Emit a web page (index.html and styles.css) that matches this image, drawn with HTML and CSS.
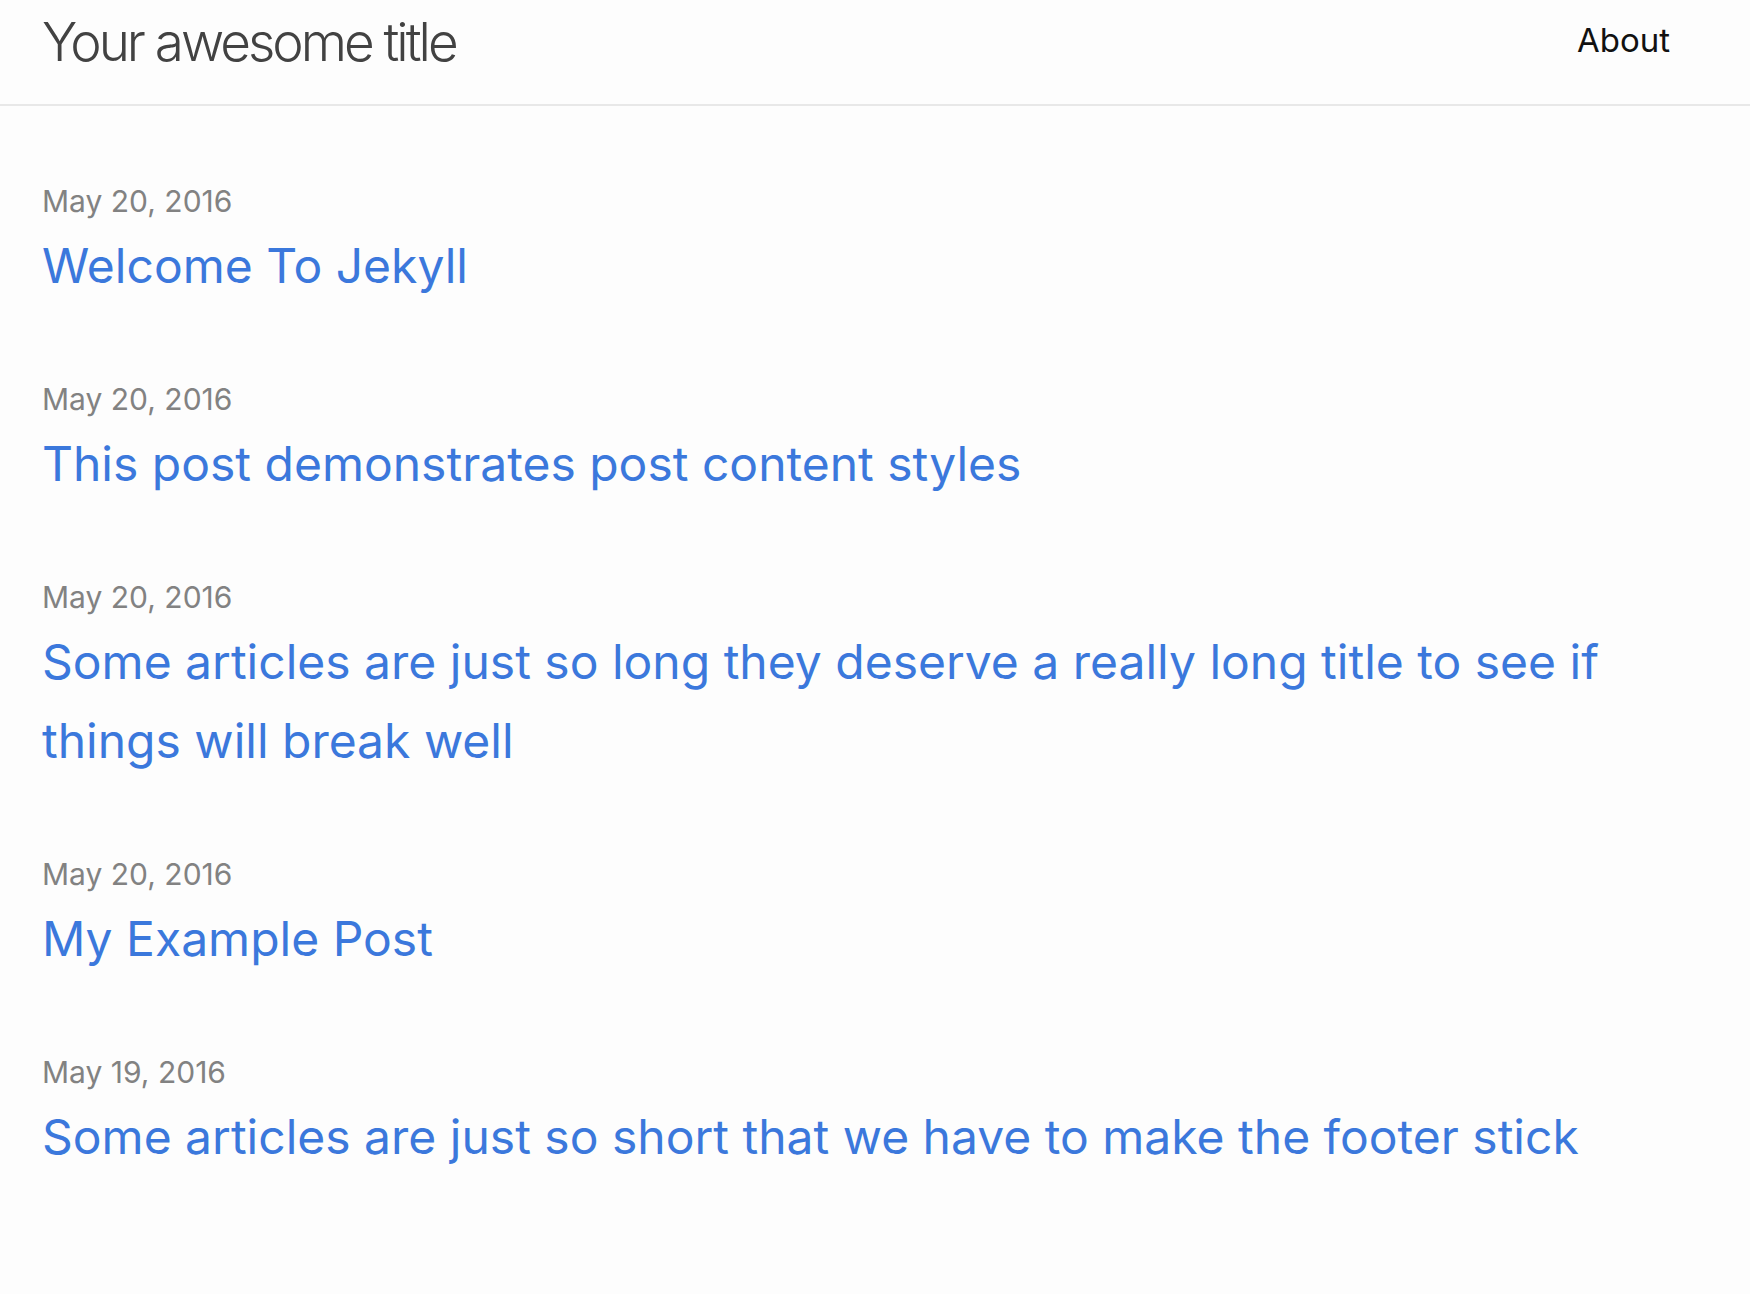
FILE: index.html
```html
<!DOCTYPE html>
<html lang="en">
<head>
<meta charset="utf-8">
<title>Your awesome title</title>
<link rel="stylesheet" href="styles.css">
</head>
<body>
<header class="site-header">
  <div class="header-inner">
    <a class="site-title" href="#">Your awesome title</a>
    <nav class="site-nav"><a class="page-link" href="#">About</a></nav>
  </div>
</header>
<main class="page-content">
  <ul class="post-list">
    <li class="post-item">
      <span class="post-meta">May 20, 2016</span>
      <a class="post-link" href="#">Welcome To Jekyll</a>
    </li>
    <li class="post-item">
      <span class="post-meta">May 20, 2016</span>
      <a class="post-link" href="#">This post demonstrates post content styles</a>
    </li>
    <li class="post-item">
      <span class="post-meta">May 20, 2016</span>
      <a class="post-link" href="#">Some articles are just so long they deserve a really long title to see if things will break well</a>
    </li>
    <li class="post-item">
      <span class="post-meta">May 20, 2016</span>
      <a class="post-link" href="#">My Example Post</a>
    </li>
    <li class="post-item">
      <span class="post-meta">May 19, 2016</span>
      <a class="post-link" href="#">Some articles are just so short that we have to make the footer stick</a>
    </li>
  </ul>
</main>
</body>
</html>
```
FILE: styles.css
```css
html, body {
  margin: 0;
  padding: 0;
  background: #fdfdfd;
}
body {
  font-family: Inter, "Noto Sans", "Liberation Sans", sans-serif;
  color: #111111;
}
a {
  text-decoration: none;
}
.site-header {
  border-bottom: 2px solid #e8e8e8;
  height: 106px;
  box-sizing: border-box;
}
.header-inner {
  display: flex;
  justify-content: space-between;
  align-items: flex-start;
  padding: 0 80px 0 42px;
}
.site-title {
  font-size: 53px;
  font-weight: 300;
  letter-spacing: -3px;
  color: #424242;
  line-height: 84px;
}
.site-nav {
  padding-top: 12px;
}
.page-link {
  font-size: 33px;
  color: #111111;
  line-height: 56px;
}
.page-content {
  padding: 72px 42px 0 42px;
}
.post-list {
  list-style: none;
  margin: 0;
  padding: 0;
  display: flex;
  flex-direction: column;
  gap: 71px;
}
.post-item {
  display: flex;
  flex-direction: column;
  gap: 2px;
}
.post-meta {
  font-size: 30px;
  color: #828282;
  line-height: 46px;
}
.post-link {
  font-size: 48px;
  color: #3b78dc;
  line-height: 79px;
}
```
